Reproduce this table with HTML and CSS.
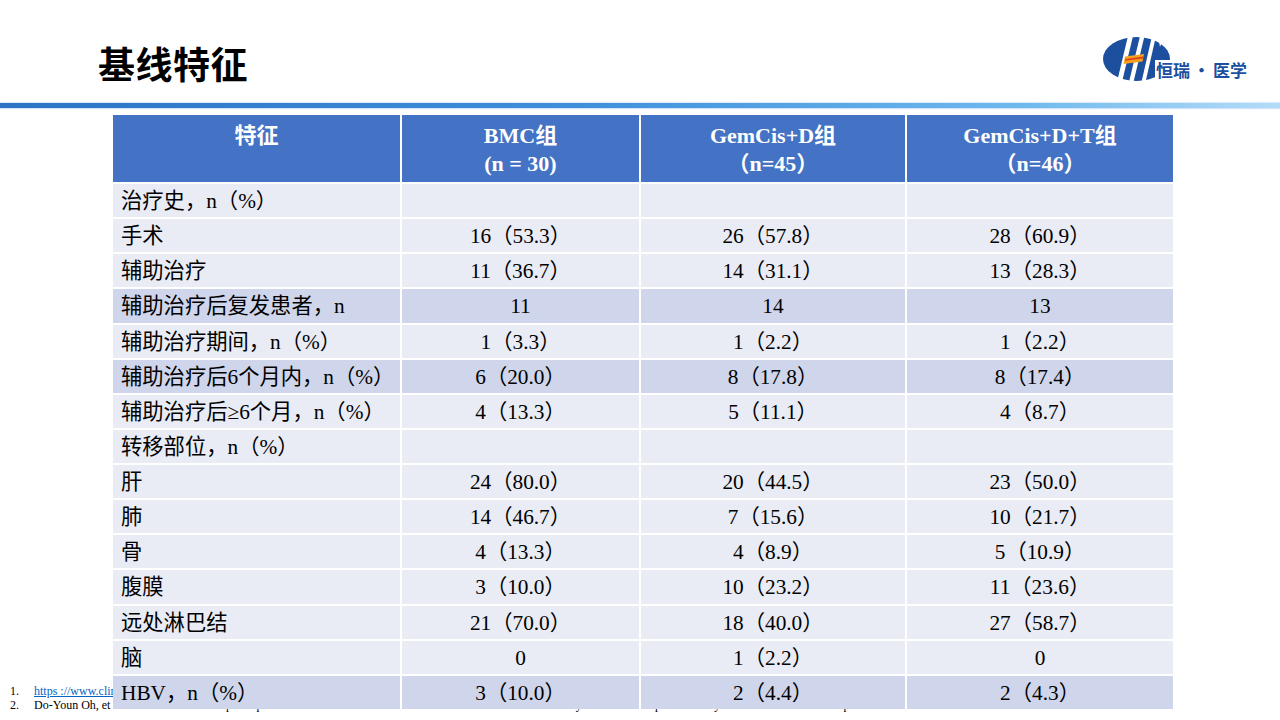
FILE: index.html
```html
<!DOCTYPE html>
<html lang="zh-CN">
<head>
<meta charset="utf-8">
<title>基线特征</title>
<link rel="stylesheet" href="styles.css">
</head>
<body>
<div class="slide">
  <header class="top">
    <h1 class="title">基线特征</h1>
    <div class="logo">
      <svg class="logo-mark" width="76" height="48" viewBox="0 0 76 48" aria-hidden="true">
        <ellipse cx="36.5" cy="23" rx="33.5" ry="22" fill="#1d4f9f"/>
        <path d="M58 0 L60 11 C61 7 63 7 64 11 C65 7 68 7 69 12 L72 0 Z" fill="#ffffff"/>
        <polygon points="28,0 33,0 22,46 17,46" fill="#ffffff"/>
        <polygon points="40,0 44.5,0 33.5,46 29,46" fill="#ffffff"/>
        <polygon points="52,0 56,0 45.5,46 41.5,46" fill="#ffffff"/>
        <polygon points="25,20.5 44,18 42.5,25.5 23.5,28" fill="#f4a21c"/>
        <polygon points="25.4,23 43.5,20.6 43.1,22.4 25,24.8" fill="#e2421f"/>
      </svg>
      <span class="logo-text">恒瑞<span class="logo-dot">·</span>医学</span>
    </div>
  </header>
  <div class="rule"></div>

  <div class="grid">
    <div class="row head">
      <div class="cell">特征</div>
      <div class="cell">BMC组<br>(n = 30)</div>
      <div class="cell">GemCis+D组<br>（n=45）</div>
      <div class="cell">GemCis+D+T组<br>（n=46）</div>
    </div>
    <div class="row">
      <div class="cell label">治疗史，n（%）</div><div class="cell"></div><div class="cell"></div><div class="cell"></div>
    </div>
    <div class="row">
      <div class="cell label">手术</div><div class="cell">16（53.3）</div><div class="cell">26（57.8）</div><div class="cell">28（60.9）</div>
    </div>
    <div class="row">
      <div class="cell label">辅助治疗</div><div class="cell">11（36.7）</div><div class="cell">14（31.1）</div><div class="cell">13（28.3）</div>
    </div>
    <div class="row dark">
      <div class="cell label">辅助治疗后复发患者，n</div><div class="cell">11</div><div class="cell">14</div><div class="cell">13</div>
    </div>
    <div class="row">
      <div class="cell label">辅助治疗期间，n（%）</div><div class="cell">1（3.3）</div><div class="cell">1（2.2）</div><div class="cell">1（2.2）</div>
    </div>
    <div class="row dark">
      <div class="cell label">辅助治疗后6个月内，n（%）</div><div class="cell">6（20.0）</div><div class="cell">8（17.8）</div><div class="cell">8（17.4）</div>
    </div>
    <div class="row">
      <div class="cell label">辅助治疗后≥6个月，n（%）</div><div class="cell">4（13.3）</div><div class="cell">5（11.1）</div><div class="cell">4（8.7）</div>
    </div>
    <div class="row">
      <div class="cell label">转移部位，n（%）</div><div class="cell"></div><div class="cell"></div><div class="cell"></div>
    </div>
    <div class="row">
      <div class="cell label">肝</div><div class="cell">24（80.0）</div><div class="cell">20（44.5）</div><div class="cell">23（50.0）</div>
    </div>
    <div class="row">
      <div class="cell label">肺</div><div class="cell">14（46.7）</div><div class="cell">7（15.6）</div><div class="cell">10（21.7）</div>
    </div>
    <div class="row">
      <div class="cell label">骨</div><div class="cell">4（13.3）</div><div class="cell">4（8.9）</div><div class="cell">5（10.9）</div>
    </div>
    <div class="row">
      <div class="cell label">腹膜</div><div class="cell">3（10.0）</div><div class="cell">10（23.2）</div><div class="cell">11（23.6）</div>
    </div>
    <div class="row">
      <div class="cell label">远处淋巴结</div><div class="cell">21（70.0）</div><div class="cell">18（40.0）</div><div class="cell">27（58.7）</div>
    </div>
    <div class="row">
      <div class="cell label">脑</div><div class="cell">0</div><div class="cell">1（2.2）</div><div class="cell">0</div>
    </div>
    <div class="row dark">
      <div class="cell label">HBV，n（%）</div><div class="cell">3（10.0）</div><div class="cell">2（4.4）</div><div class="cell">2（4.3）</div>
    </div>
  </div>

  <ol class="refs">
    <li><span class="num">1.</span><a class="ref-link" href="#">https ://www.clinicaltrials.gov/ct2/show/NCT03046862</a></li>
    <li><span class="num">2.</span><span>Do-Youn Oh, et al. Gemcitabine and cisplatin plus durvalumab with or without tremelimumab in advanced biliary tract cancer: a phase 2 study. Lancet Gastroenterol Hepatol. 2022.</span></li>
  </ol>
</div>
</body>
</html>
```

FILE: styles.css
```css
* { box-sizing: border-box; }

html, body {
  margin: 0;
  padding: 0;
  background: #ffffff;
}

.slide {
  position: relative;
  width: 1280px;
  height: 720px;
  overflow: hidden;
  background: #ffffff;
  font-family: "Liberation Serif", "Noto Sans CJK SC", serif;
}

.top {
  height: 103px;
  display: flex;
  justify-content: space-between;
  align-items: flex-start;
}

.title {
  margin: 45px 0 0 98px;
  font-family: "Noto Sans CJK SC", "Noto Sans", sans-serif;
  font-weight: 700;
  font-size: 37px;
  line-height: 37px;
  color: #000000;
  letter-spacing: 0.5px;
}

.logo {
  position: relative;
  width: 152px;
  height: 50px;
  margin: 36px 28px 0 0;
}

.logo-mark {
  display: block;
}

.logo-text {
  position: absolute;
  left: 55px;
  top: 24px;
  font-family: "Noto Sans CJK SC", sans-serif;
  font-weight: 700;
  font-size: 17px;
  line-height: 20px;
  color: #1d4f9f;
  white-space: nowrap;
  background: #ffffff;
  padding-left: 1px;
}

.logo-dot {
  margin: 0 3px;
}

.rule {
  height: 5px;
  background: linear-gradient(90deg, #2c73c6 0%, #3f8fdb 45%, #6fb9ee 80%, #b4dcf7 100%);
  box-shadow: 0 1px 1px rgba(120, 180, 235, 0.35), 0 -1px 1px rgba(120, 180, 235, 0.25);
}

.grid {
  position: relative;
  z-index: 1;
  margin: 7px 0 0 113px;
  width: 1060px;
  display: grid;
  grid-template-columns: 287px 237px 264px 266px;
  grid-template-rows: 67px repeat(15, 33.14px);
  gap: 2px;
  background: #ffffff;
}

.row {
  display: contents;
}

.cell {
  display: flex;
  align-items: center;
  justify-content: center;
  background: #e9ebf5;
  font-size: 21.3px;
  line-height: 33px;
  color: #000000;
  white-space: nowrap;
  padding-top: 2px;
}

.row.dark .cell {
  background: #cfd5ea;
}

.cell.label {
  justify-content: flex-start;
  padding-left: 8px;
}

.row.head .cell {
  background: #4472c4;
  color: #ffffff;
  font-weight: 700;
  font-size: 22px;
  line-height: 28px;
  align-items: flex-start;
  text-align: center;
  padding-top: 7px;
}

.refs {
  position: absolute;
  left: 10px;
  top: 684px;
  margin: 0;
  padding: 0;
  list-style: none;
  font-family: "Liberation Serif", serif;
  font-size: 12px;
  line-height: 14px;
  color: #000000;
  white-space: nowrap;
}

.refs li {
  display: flex;
}

.refs .num {
  width: 24px;
}

.ref-link {
  color: #0563c1;
  text-decoration: underline;
}
```
